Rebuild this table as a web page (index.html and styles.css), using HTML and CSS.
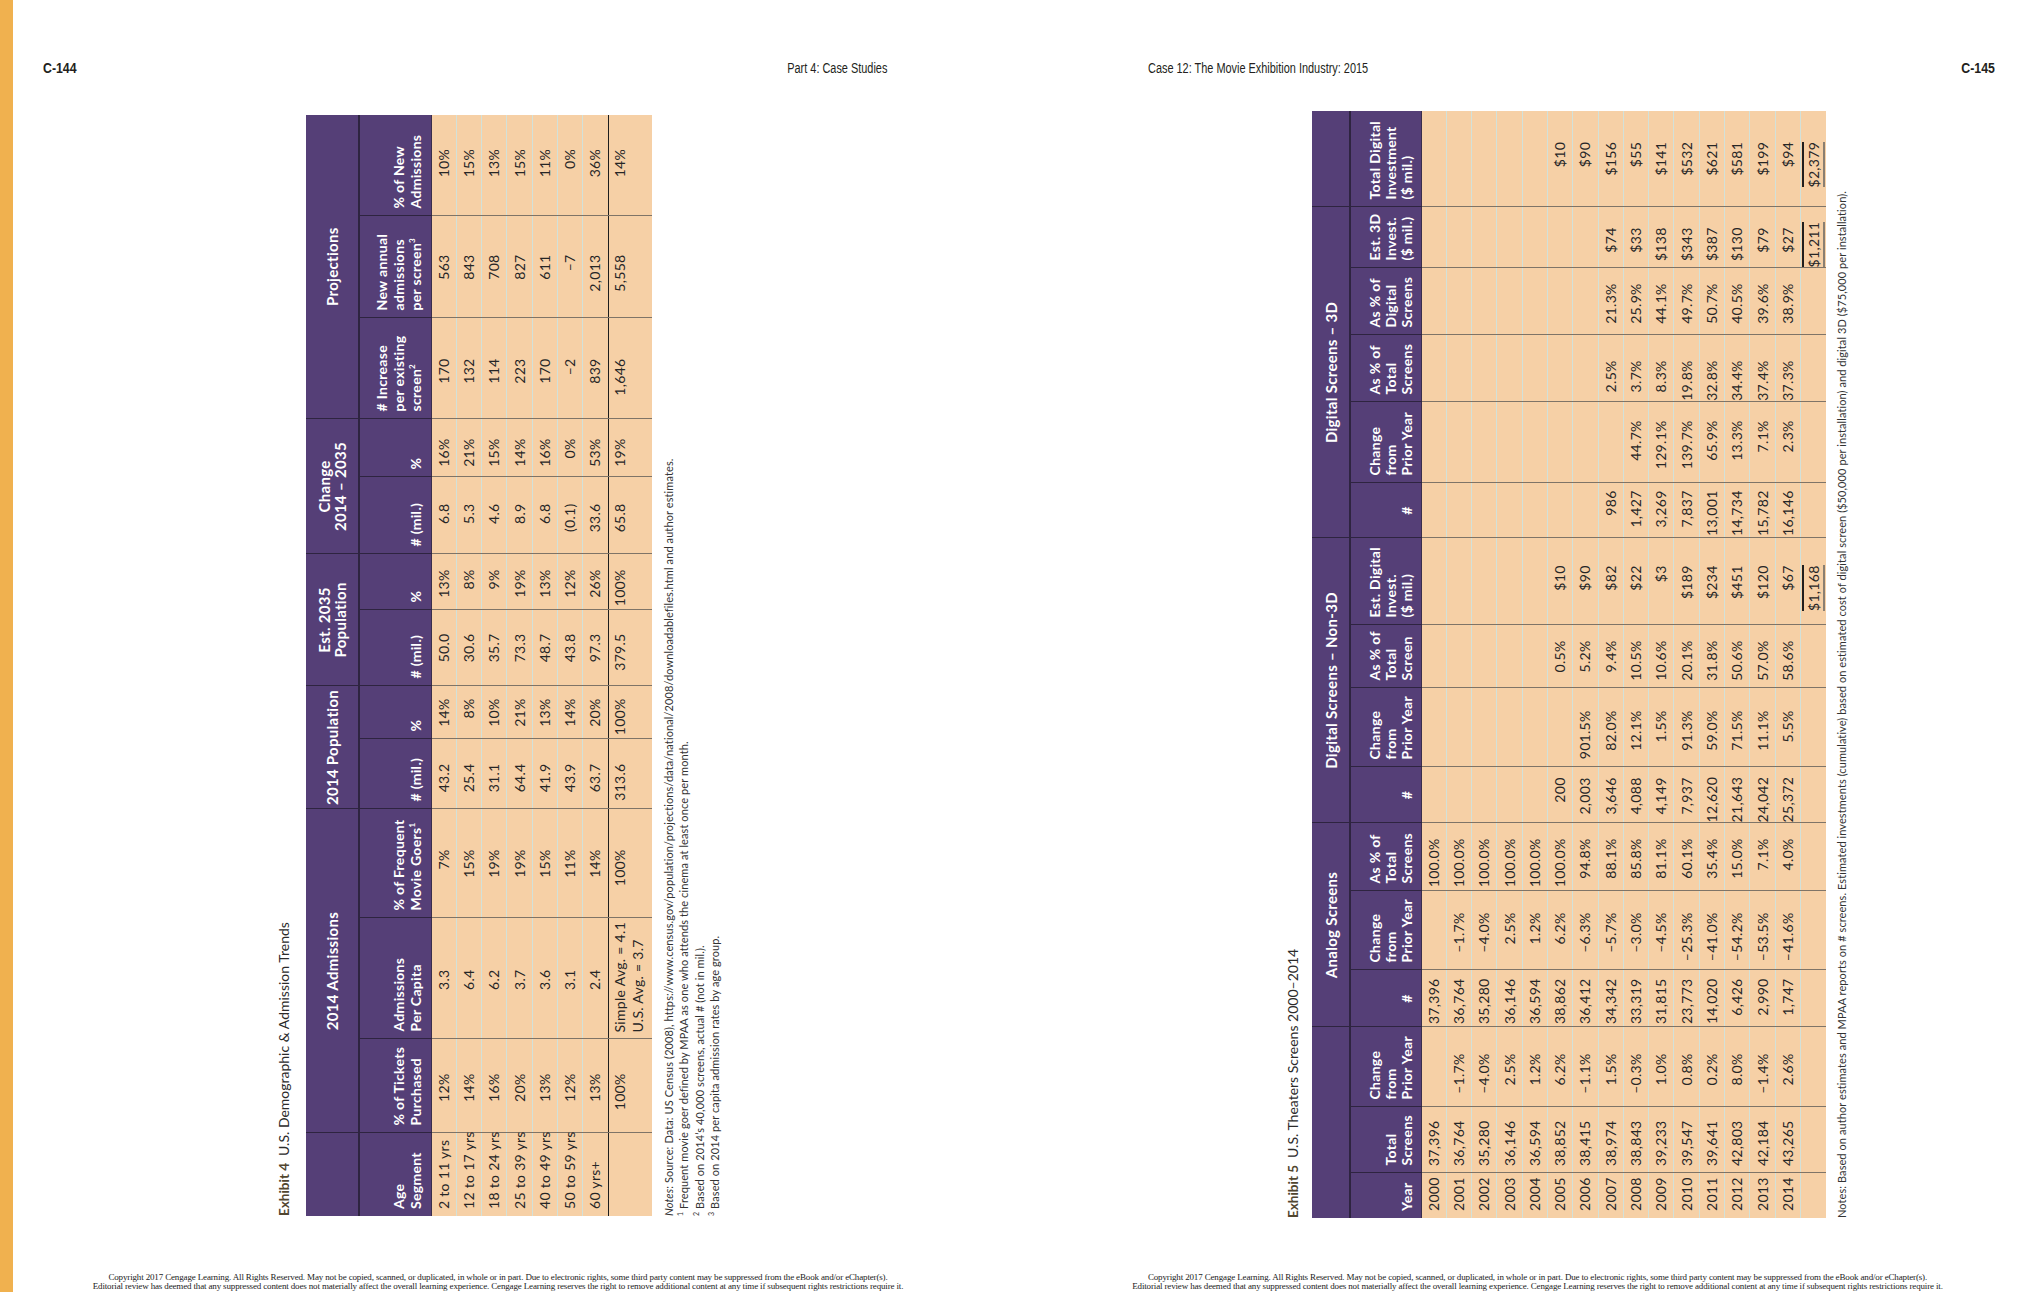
FILE: index.html
```html
<!DOCTYPE html>
<html lang="en">
<head>
<meta charset="utf-8">
<title>C-144 / C-145</title>
<link rel="stylesheet" href="styles.css">
</head>
<body>
<div class="spread">
  <section class="page page-left">
    <header class="running">
      <span class="folio">C-144</span>
      <span class="runtitle">Part 4: Case Studies</span>
    </header>
    <div class="stage">
      <div class="rot rot4">
        <div class="rot-inner">
          <div class="ex-title"><b>Exhibit 4</b>U.S. Demographic &amp; Admission Trends</div>
          <table class="tbl t4">
            <colgroup>
              <col><col><col><col><col><col><col><col><col><col><col><col><col>
            </colgroup>
            <thead>
              <tr class="grp">
                <th></th>
                <th colspan="3">2014 Admissions</th>
                <th colspan="2">2014 Population</th>
                <th colspan="2">Est. 2035<br>Population</th>
                <th colspan="2">Change<br>2014 – 2035</th>
                <th colspan="3">Projections</th>
              </tr>
              <tr class="cols">
                <th>Age<br>Segment</th>
                <th>% of Tickets<br>Purchased</th>
                <th>Admissions<br>Per Capita</th>
                <th>% of Frequent<br>Movie Goers<sup>1</sup></th>
                <th># (mil.)</th>
                <th>%</th>
                <th># (mil.)</th>
                <th>%</th>
                <th># (mil.)</th>
                <th>%</th>
                <th># Increase<br>per existing<br>screen<sup>2</sup></th>
                <th>New annual<br>admissions<br>per screen<sup>3</sup></th>
                <th>% of New<br>Admissions</th>
              </tr>
            </thead>
            <tbody>
              <tr><td>2 to 11 yrs</td><td>12%</td><td>3.3</td><td>7%</td><td>43.2</td><td>14%</td><td>50.0</td><td>13%</td><td>6.8</td><td>16%</td><td>170</td><td>563</td><td>10%</td></tr>
              <tr><td>12 to 17 yrs</td><td>14%</td><td>6.4</td><td>15%</td><td>25.4</td><td>8%</td><td>30.6</td><td>8%</td><td>5.3</td><td>21%</td><td>132</td><td>843</td><td>15%</td></tr>
              <tr><td>18 to 24 yrs</td><td>16%</td><td>6.2</td><td>19%</td><td>31.1</td><td>10%</td><td>35.7</td><td>9%</td><td>4.6</td><td>15%</td><td>114</td><td>708</td><td>13%</td></tr>
              <tr><td>25 to 39 yrs</td><td>20%</td><td>3.7</td><td>19%</td><td>64.4</td><td>21%</td><td>73.3</td><td>19%</td><td>8.9</td><td>14%</td><td>223</td><td>827</td><td>15%</td></tr>
              <tr><td>40 to 49 yrs</td><td>13%</td><td>3.6</td><td>15%</td><td>41.9</td><td>13%</td><td>48.7</td><td>13%</td><td>6.8</td><td>16%</td><td>170</td><td>611</td><td>11%</td></tr>
              <tr><td>50 to 59 yrs</td><td>12%</td><td>3.1</td><td>11%</td><td>43.9</td><td>14%</td><td>43.8</td><td>12%</td><td>(0.1)</td><td>0%</td><td>–2</td><td>–7</td><td>0%</td></tr>
              <tr><td>60 yrs+</td><td>13%</td><td>2.4</td><td>14%</td><td>63.7</td><td>20%</td><td>97.3</td><td>26%</td><td>33.6</td><td>53%</td><td>839</td><td>2,013</td><td>36%</td></tr>
              <tr class="total"><td></td><td>100%</td><td class="avg">Simple Avg. = 4.1<br>U.S. Avg. = 3.7</td><td>100%</td><td>313.6</td><td>100%</td><td>379.5</td><td>100%</td><td>65.8</td><td>19%</td><td>1,646</td><td>5,558</td><td>14%</td></tr>
            </tbody>
          </table>
          <div class="notes">
            <div><i>Notes</i>: Source: Data: US Census (2008), https://www.census.gov/population/projections/data/national/2008/downloadablefiles.html and author estimates.</div>
            <div><sup>1</sup> Frequent movie goer defined by MPAA as one who attends the cinema at least once per month.</div>
            <div><sup>2</sup> Based on 2014’s 40,000 screens, actual # (not in mil.).</div>
            <div><sup>3</sup> Based on 2014 per capita admission rates by age group.</div>
          </div>
        </div>
      </div>
    </div>
    <footer class="copy">
      <div>Copyright 2017 Cengage Learning. All Rights Reserved. May not be copied, scanned, or duplicated, in whole or in part. Due to electronic rights, some third party content may be suppressed from the eBook and/or eChapter(s).</div>
      <div>Editorial review has deemed that any suppressed content does not materially affect the overall learning experience. Cengage Learning reserves the right to remove additional content at any time if subsequent rights restrictions require it.</div>
    </footer>
  </section>

  <section class="page page-right">
    <header class="running">
      <span class="runtitle">Case 12: The Movie Exhibition Industry: 2015</span>
      <span class="folio">C-145</span>
    </header>
    <div class="stage">
      <div class="rot rot5">
        <div class="rot-inner">
          <div class="ex-title"><b>Exhibit 5</b>U.S. Theaters Screens 2000–2014</div>
          <table class="tbl t5">
            <colgroup>
              <col><col><col><col><col><col><col><col><col><col><col><col><col><col><col><col>
            </colgroup>
            <thead>
              <tr class="grp">
                <th colspan="3"></th>
                <th colspan="3">Analog Screens</th>
                <th colspan="4">Digital Screens – Non-3D</th>
                <th colspan="5">Digital Screens – 3D</th>
                <th></th>
              </tr>
              <tr class="cols">
                <th>Year</th>
                <th>Total<br>Screens</th>
                <th>Change<br>from<br>Prior Year</th>
                <th class="c">#</th>
                <th>Change<br>from<br>Prior Year</th>
                <th>As % of<br>Total<br>Screens</th>
                <th class="c">#</th>
                <th>Change<br>from<br>Prior Year</th>
                <th>As % of<br>Total<br>Screen</th>
                <th>Est. Digital<br>Invest.<br>($ mil.)</th>
                <th class="c">#</th>
                <th>Change<br>from<br>Prior Year</th>
                <th>As % of<br>Total<br>Screens</th>
                <th>As % of<br>Digital<br>Screens</th>
                <th>Est. 3D<br>Invest.<br>($ mil.)</th>
                <th>Total Digital<br>Investment<br>($ mil.)</th>
              </tr>
            </thead>
            <tbody>
              <tr><td>2000</td><td>37,396</td><td></td><td>37,396</td><td></td><td>100.0%</td><td></td><td></td><td></td><td></td><td></td><td></td><td></td><td></td><td></td><td></td></tr>
              <tr><td>2001</td><td>36,764</td><td>–1.7%</td><td>36,764</td><td>–1.7%</td><td>100.0%</td><td></td><td></td><td></td><td></td><td></td><td></td><td></td><td></td><td></td><td></td></tr>
              <tr><td>2002</td><td>35,280</td><td>–4.0%</td><td>35,280</td><td>–4.0%</td><td>100.0%</td><td></td><td></td><td></td><td></td><td></td><td></td><td></td><td></td><td></td><td></td></tr>
              <tr><td>2003</td><td>36,146</td><td>2.5%</td><td>36,146</td><td>2.5%</td><td>100.0%</td><td></td><td></td><td></td><td></td><td></td><td></td><td></td><td></td><td></td><td></td></tr>
              <tr><td>2004</td><td>36,594</td><td>1.2%</td><td>36,594</td><td>1.2%</td><td>100.0%</td><td></td><td></td><td></td><td></td><td></td><td></td><td></td><td></td><td></td><td></td></tr>
              <tr><td>2005</td><td>38,852</td><td>6.2%</td><td>38,862</td><td>6.2%</td><td>100.0%</td><td>200</td><td></td><td>0.5%</td><td>$10</td><td></td><td></td><td></td><td></td><td></td><td>$10</td></tr>
              <tr><td>2006</td><td>38,415</td><td>–1.1%</td><td>36,412</td><td>–6.3%</td><td>94.8%</td><td>2,003</td><td>901.5%</td><td>5.2%</td><td>$90</td><td></td><td></td><td></td><td></td><td></td><td>$90</td></tr>
              <tr><td>2007</td><td>38,974</td><td>1.5%</td><td>34,342</td><td>–5.7%</td><td>88.1%</td><td>3,646</td><td>82.0%</td><td>9.4%</td><td>$82</td><td>986</td><td></td><td>2.5%</td><td>21.3%</td><td>$74</td><td>$156</td></tr>
              <tr><td>2008</td><td>38,843</td><td>–0.3%</td><td>33,319</td><td>–3.0%</td><td>85.8%</td><td>4,088</td><td>12.1%</td><td>10.5%</td><td>$22</td><td>1,427</td><td>44.7%</td><td>3.7%</td><td>25.9%</td><td>$33</td><td>$55</td></tr>
              <tr><td>2009</td><td>39,233</td><td>1.0%</td><td>31,815</td><td>–4.5%</td><td>81.1%</td><td>4,149</td><td>1.5%</td><td>10.6%</td><td>$3</td><td>3,269</td><td>129.1%</td><td>8.3%</td><td>44.1%</td><td>$138</td><td>$141</td></tr>
              <tr><td>2010</td><td>39,547</td><td>0.8%</td><td>23,773</td><td>–25.3%</td><td>60.1%</td><td>7,937</td><td>91.3%</td><td>20.1%</td><td>$189</td><td>7,837</td><td>139.7%</td><td>19.8%</td><td>49.7%</td><td>$343</td><td>$532</td></tr>
              <tr><td>2011</td><td>39,641</td><td>0.2%</td><td>14,020</td><td>–41.0%</td><td>35.4%</td><td>12,620</td><td>59.0%</td><td>31.8%</td><td>$234</td><td>13,001</td><td>65.9%</td><td>32.8%</td><td>50.7%</td><td>$387</td><td>$621</td></tr>
              <tr><td>2012</td><td>42,803</td><td>8.0%</td><td>6,426</td><td>–54.2%</td><td>15.0%</td><td>21,643</td><td>71.5%</td><td>50.6%</td><td>$451</td><td>14,734</td><td>13.3%</td><td>34.4%</td><td>40.5%</td><td>$130</td><td>$581</td></tr>
              <tr><td>2013</td><td>42,184</td><td>–1.4%</td><td>2,990</td><td>–53.5%</td><td>7.1%</td><td>24,042</td><td>11.1%</td><td>57.0%</td><td>$120</td><td>15,782</td><td>7.1%</td><td>37.4%</td><td>39.6%</td><td>$79</td><td>$199</td></tr>
              <tr><td>2014</td><td>43,265</td><td>2.6%</td><td>1,747</td><td>–41.6%</td><td>4.0%</td><td>25,372</td><td>5.5%</td><td>58.6%</td><td>$67</td><td>16,146</td><td>2.3%</td><td>37.3%</td><td>38.9%</td><td>$27</td><td>$94</td></tr>
              <tr class="total"><td></td><td></td><td></td><td></td><td></td><td></td><td></td><td></td><td></td><td><span class="sum">$1,168</span></td><td></td><td></td><td></td><td></td><td><span class="sum">$1,211</span></td><td><span class="sum">$2,379</span></td></tr>
            </tbody>
          </table>
          <div class="notes">
            <div>Notes: Based on author estimates and MPAA reports on # screens. Estimated investments (cumulative) based on estimated cost of digital screen ($50,000 per installation) and digital 3D ($75,000 per installation).</div>
          </div>
        </div>
      </div>
    </div>
    <footer class="copy">
      <div>Copyright 2017 Cengage Learning. All Rights Reserved. May not be copied, scanned, or duplicated, in whole or in part. Due to electronic rights, some third party content may be suppressed from the eBook and/or eChapter(s).</div>
      <div>Editorial review has deemed that any suppressed content does not materially affect the overall learning experience. Cengage Learning reserves the right to remove additional content at any time if subsequent rights restrictions require it.</div>
    </footer>
  </section>
</div>
</body>
</html>
```

FILE: styles.css
```css
* { box-sizing: border-box; }
html, body { margin: 0; padding: 0; }
body {
  width: 2022px;
  height: 1292px;
  overflow: hidden;
  background: #ffffff;
  font-family: Lato, "Open Sans", sans-serif;
  color: #2a2a2a;
}
.spread { display: flex; width: 2022px; height: 1292px; }
.page {
  width: 1011px;
  height: 1292px;
  display: flex;
  flex-direction: column;
  flex: none;
}
.page-left { border-left: 13px solid #f0b14f; }

/* running heads */
.running {
  height: 78px;
  padding-top: 58px;
  display: flex;
  justify-content: space-between;
  align-items: center;
  font-family: "Liberation Sans", Arial, sans-serif;
  font-size: 14px;
  line-height: 20px;
  color: #231f20;
  white-space: nowrap;
}
.page-left .running { padding-left: 30px; padding-right: 124px; }
.page-right .running { padding-left: 137px; padding-right: 27px; }
.folio { display: inline-block; font-weight: bold; font-size: 15px; transform: scaleX(0.82); }
.runtitle { display: inline-block; transform: scaleX(0.78); }
.page-left .folio { transform-origin: left center; }
.page-left .runtitle { transform-origin: right center; }
.page-right .folio { transform-origin: right center; }
.page-right .runtitle { transform-origin: left center; }

.stage { flex: 1; }

/* rotated exhibits */
.rot { position: relative; }
.rot-inner { transform-origin: 0 0; }
.rot4 { width: 448px; height: 1101px; margin: 37px 0 0 261px; }
.rot4 .rot-inner { width: 1101px; height: 448px; transform: translateY(1101px) rotate(-90deg); }
.rot5 { width: 567px; height: 1107px; margin: 33px 0 0 272px; }
.rot5 .rot-inner { width: 1107px; height: 567px; transform: translateY(1107px) rotate(-90deg); }

.ex-title {
  height: 20px;
  line-height: 20px;
  font-size: 14px;
  color: #2b2b2b;
  white-space: nowrap;
}
.ex-title b { color: #51462f; font-size: 13.5px; margin-right: 7px; }
.rot4 .ex-title { margin-bottom: 12px; }
.rot5 .ex-title { margin-bottom: 9px; }

.notes {
  font-size: 11px;
  line-height: 15.6px;
  letter-spacing: 0.1px;
  color: #333333;
  white-space: nowrap;
}
.notes sup { font-size: 7px; line-height: 0; }
.rot4 .notes { margin-top: 9px; }
.rot5 .notes { margin-top: 8px; line-height: 16px; letter-spacing: 0.08px; }

/* tables */
.tbl {
  border-collapse: collapse;
  table-layout: fixed;
  font-size: 14px;
  letter-spacing: 0.3px;
}
.t4 { width: 1101px; }
.t5 { width: 1107px; }
.tbl th {
  background: #553f77;
  color: #ffffff;
  font-weight: 700;
  line-height: 16px;
  padding: 0;
}
.tbl th sup { font-size: 8px; line-height: 0; vertical-align: 6px; }
.tbl .grp th {
  text-align: center;
  vertical-align: middle;
  font-size: 15px;
  border-bottom: 2px solid #2e2440;
}
.t4 .grp th { height: 53px; }
.t5 .grp th { height: 38px; }
.tbl .cols th {
  text-align: left;
  vertical-align: bottom;
  padding: 0 2px 7px 7px;
  white-space: nowrap;
}
.t4 .cols th { height: 72px; line-height: 17px; }
.t5 .cols th { height: 71px; padding-bottom: 6px; }
.t5 .cols th.c { text-align: center; padding-left: 0; padding-right: 0; }
.tbl thead th + th { border-left: 1.5px solid #2e2440; }

.tbl td {
  background: #f6d0a6;
  height: 25.3px;
  padding: 0;
  vertical-align: middle;
  text-align: right;
  line-height: 16px;
  white-space: nowrap;
  color: #262626;
}
.tbl td + td { border-left: 1.5px solid #7f7467; }
.tbl tbody tr + tr td { border-top: 1px solid #d2e1d9; }
.tbl tbody tr:first-child td { border-top: 1px solid #3a2e4c; }
.tbl td:first-child { text-align: left; padding-left: 7px; }

/* exhibit 4 columns */
.t4 col:nth-child(1) { width: 83px; }
.t4 col:nth-child(2) { width: 94px; }
.t4 col:nth-child(3) { width: 121px; }
.t4 col:nth-child(4) { width: 109px; }
.t4 col:nth-child(5) { width: 70px; }
.t4 col:nth-child(6) { width: 53px; }
.t4 col:nth-child(7) { width: 76px; }
.t4 col:nth-child(8) { width: 56px; }
.t4 col:nth-child(9) { width: 77px; }
.t4 col:nth-child(10) { width: 58px; }
.t4 col:nth-child(11) { width: 101px; }
.t4 col:nth-child(12) { width: 102px; }
.t4 col:nth-child(13) { width: 101px; }

.t4 td:nth-child(2) { padding-right: 34px; }
.t4 td:nth-child(3) { padding-right: 51px; }
.t4 td:nth-child(4) { padding-right: 40px; }
.t4 td:nth-child(5) { padding-right: 24px; }
.t4 td:nth-child(6) { padding-right: 12px; }
.t4 td:nth-child(7) { padding-right: 23px; }
.t4 td:nth-child(8) { padding-right: 15px; }
.t4 td:nth-child(9) { padding-right: 26px; }
.t4 td:nth-child(10) { padding-right: 19px; }
.t4 td:nth-child(11) { padding-right: 40px; }
.t4 td:nth-child(12) { padding-right: 38px; }
.t4 td:nth-child(13) { padding-right: 34px; }

.t4 tr.total td {
  border-top: 1.5px solid #1d1d1d;
  height: 43.6px;
  vertical-align: top;
  padding-top: 2px;
  line-height: 18px;
}
.t4 tr.total td.avg { text-align: left; padding-left: 6px; padding-right: 0; }

/* exhibit 5 columns */
.t5 col:nth-child(1) { width: 45px; }
.t5 col:nth-child(2) { width: 66px; }
.t5 col:nth-child(3) { width: 80px; }
.t5 col:nth-child(4) { width: 57px; }
.t5 col:nth-child(5) { width: 79px; }
.t5 col:nth-child(6) { width: 68px; }
.t5 col:nth-child(7) { width: 56px; }
.t5 col:nth-child(8) { width: 79px; }
.t5 col:nth-child(9) { width: 63px; }
.t5 col:nth-child(10) { width: 87px; }
.t5 col:nth-child(11) { width: 55px; }
.t5 col:nth-child(12) { width: 81px; }
.t5 col:nth-child(13) { width: 67px; }
.t5 col:nth-child(14) { width: 67px; }
.t5 col:nth-child(15) { width: 61px; }
.t5 col:nth-child(16) { width: 96px; }

.t5 td:nth-child(2) { padding-right: 13px; }
.t5 td:nth-child(3) { padding-right: 26px; }
.t5 td:nth-child(4) { padding-right: 8px; }
.t5 td:nth-child(5) { padding-right: 21px; }
.t5 td:nth-child(6) { padding-right: 15px; }
.t5 td:nth-child(7) { padding-right: 10px; }
.t5 td:nth-child(8) { padding-right: 22px; }
.t5 td:nth-child(9) { padding-right: 15px; }
.t5 td:nth-child(10) { padding-right: 27px; }
.t5 td:nth-child(11) { padding-right: 7px; }
.t5 td:nth-child(12) { padding-right: 18px; }
.t5 td:nth-child(13) { padding-right: 25px; }
.t5 td:nth-child(14) { padding-right: 15px; }
.t5 td:nth-child(15) { padding-right: 20px; }
.t5 td:nth-child(16) { padding-right: 31px; }

.sum {
  display: inline-block;
  border-top: 2px solid #1f1f1f;
  border-bottom: 2px solid #8a7f72;
  line-height: 19px;
}

/* footer */
.copy {
  font-family: "Liberation Serif", "Times New Roman", serif;
  font-size: 9px;
  line-height: 9px;
  letter-spacing: -0.15px;
  text-align: center;
  color: #222222;
  padding-bottom: 1px;
  white-space: nowrap;
}
.page-left .copy { padding-right: 28px; }
.page-right .copy { padding-left: 42px; }
```
